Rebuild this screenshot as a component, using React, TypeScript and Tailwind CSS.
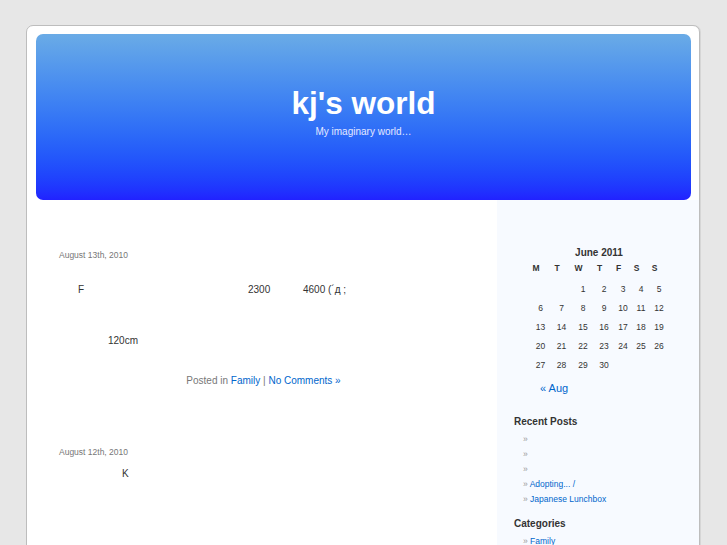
import React from "react";

const weekdays = ["M", "T", "W", "T", "F", "S", "S"];
const colWidths = ["w-[21px]", "w-[21px]", "w-[22px]", "w-[20px]", "w-[18px]", "w-[18px]", "w-[18px]"];

const weeks: (number | null)[][] = [
  [null, null, 1, 2, 3, 4, 5],
  [6, 7, 8, 9, 10, 11, 12],
  [13, 14, 15, 16, 17, 18, 19],
  [20, 21, 22, 23, 24, 25, 26],
  [27, 28, 29, 30, null, null, null],
];

const recentPosts = ["", "", "", "Adopting... /", "Japanese Lunchbox"];

const Calendar: React.FC = () => (
  <div className="ml-[33px] w-[138px] text-[#333]">
    <div className="h-[16px] pt-[1px] text-center text-[10px] font-bold leading-[16px]">June 2011</div>
    <div className="flex h-[16px] items-center">
      {weekdays.map((d, i) => (
        <div key={i} className={`${colWidths[i]} pr-[9px] text-center text-[8.5px] font-bold`}>
          {d}
        </div>
      ))}
    </div>
    <div className="mt-[3.5px]">
      {weeks.map((week, r) => (
        <div key={r} className="flex h-[19px] items-center">
          {week.map((day, i) => (
            <div key={i} className={`${colWidths[i]} text-center text-[8.5px]`}>
              {day ?? ""}
            </div>
          ))}
        </div>
      ))}
    </div>
  </div>
);

const Sidebar: React.FC = () => (
  <aside className="w-[202px] bg-[#f7faff] pt-[44px] pb-[40px]">
    <Calendar />
    <div className="ml-[43px] mt-[6.5px] text-[11px] leading-[14px] text-[#0066cc]">« Aug</div>

    <h2 className="ml-[17px] mt-[20px] text-[10px] font-bold leading-[13px] text-[#333]">Recent Posts</h2>
    <ul className="ml-[26px] mt-[3.5px]">
      {recentPosts.map((p, i) => (
        <li key={i} className="h-[15px] text-[8.5px] leading-[15px]">
          <span className="text-[#999]">»</span>{" "}
          <span className="text-[#0066cc]">{p}</span>
        </li>
      ))}
    </ul>

    <h2 className="ml-[17px] mt-[10px] text-[10px] font-bold leading-[13px] text-[#333]">Categories</h2>
    <ul className="ml-[26px] mt-[4.5px]">
      <li className="text-[8.5px] leading-[15px]">
        <span className="text-[#999]">»</span> <span className="text-[#0066cc]">Family</span>
      </li>
    </ul>
  </aside>
);

const Content: React.FC = () => (
  <main className="w-[470px] bg-white pl-[32px] pt-[49px] pr-[29px]">
    {/* post 1 */}
    <div className="text-[8.5px] leading-[12px] text-[#777]">August 13th, 2010</div>
    <p className="mt-[22px] whitespace-nowrap text-[10px] leading-[14px] text-[#333]">
      <span className="inline-block w-[189px] pl-[19px]">F</span>
      <span className="inline-block w-[55px]">2300</span>
      <span>4600 (´д ;</span>
    </p>
    <p className="mt-[37px] pl-[49px] text-[10px] leading-[14px] text-[#333]">120cm</p>
    <p className="mt-[26px] text-center text-[10px] leading-[14px] text-[#777]">
      Posted in <span className="text-[#0066cc]">Family</span> |{" "}
      <span className="text-[#0066cc]">No Comments »</span>
    </p>

    {/* post 2 */}
    <div className="mt-[58px] text-[8.5px] leading-[12px] text-[#777]">August 12th, 2010</div>
    <p className="mt-[9px] pl-[63px] text-[10px] leading-[14px] text-[#333]">K</p>
  </main>
);

export default function App() {
  return (
    <div className="min-h-screen overflow-hidden bg-[#e7e7e7] pl-[26px] pt-[25px] font-['Liberation_Sans',Arial,sans-serif]">
      <div className="w-[674px] rounded-t-[7px] border border-[#bdbdbd] bg-white shadow-[1px_0_0_#d6d6d6]">
        <div className="pl-[9px] pt-[8px]">
          <header className="flex h-[166px] w-[655px] flex-col items-center rounded-[7px] bg-gradient-to-b from-[#6aabe6] to-[#2121ff] pt-[51px]">
            <h1 className="text-[31.5px] font-bold leading-[36px] text-white">kj's world</h1>
            <div className="mt-[4px] text-[10px] leading-[13px] text-[#e4e8ff]">My imaginary world…</div>
          </header>
        </div>
        <div className="flex">
          <Content />
          <Sidebar />
        </div>
      </div>
    </div>
  );
}
